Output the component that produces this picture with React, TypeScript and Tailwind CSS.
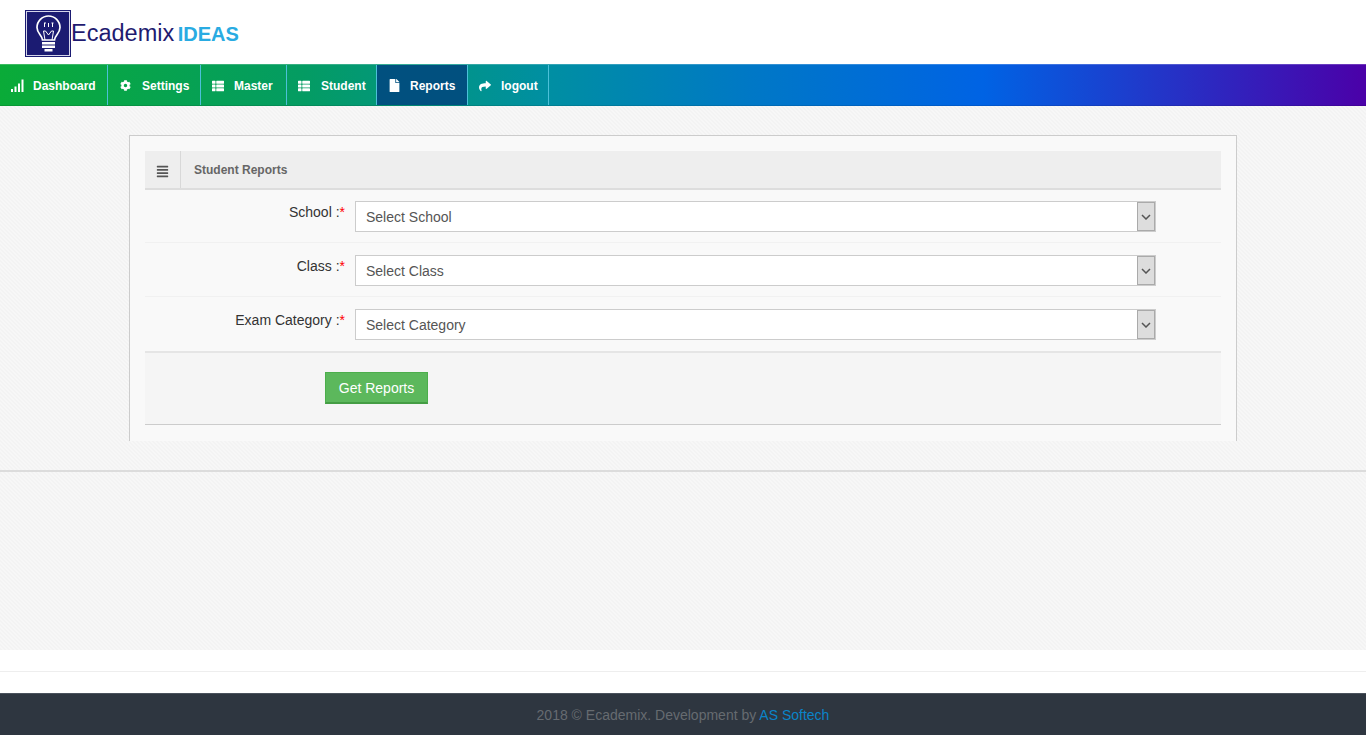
import React from "react";
import { FaCog, FaThList, FaFile, FaShare, FaAlignJustify } from "react-icons/fa";

function SignalIcon() {
  return (
    <svg width="13" height="13" viewBox="0 0 13 13">
      <rect x="0" y="10" width="2" height="3" fill="#fff" />
      <rect x="3.500" y="7.500" width="2" height="5.500" fill="#fff" />
      <rect x="7" y="4.500" width="2" height="8.500" fill="#fff" />
      <rect x="10.500" y="0.500" width="2" height="12.500" fill="#fff" />
    </svg>
  );
}

const navItems = [
  { label: "Dashboard", icon: <SignalIcon />, w: "w-[108px]", gap: "w-[33px] pl-[11px]", active: false },
  { label: "Settings", icon: <FaCog size={11} color="#fff" />, w: "w-[93px]", gap: "w-[34px] pl-[12px]", active: false },
  { label: "Master", icon: <FaThList size={12} color="#fff" />, w: "w-[86px]", gap: "w-[33px] pl-[11px]", active: false },
  { label: "Student", icon: <FaThList size={12} color="#fff" />, w: "w-[90px]", gap: "w-[34px] pl-[11px]", active: false },
  { label: "Reports", icon: <FaFile size={13} color="#fff" />, w: "w-[91px]", gap: "w-[33px] pl-[11px]", active: true },
  { label: "logout", icon: <FaShare size={12} color="#fff" />, w: "w-[81px]", gap: "w-[33px] pl-[11px]", active: false },
];

const rows = [
  { label: "School", value: "Select School", h: "h-[53px] pt-[11px] border-b border-[#f1f1f1]" },
  { label: "Class", value: "Select Class", h: "h-[54px] pt-[12px] border-b border-[#f1f1f1]" },
  { label: "Exam Category", value: "Select Category", h: "h-[54px] pt-[12px]" },
];

function Logo() {
  return (
    <svg width="46" height="47" viewBox="0 0 46 47" className="shrink-0">
      <rect x="0" y="0" width="46" height="47" fill="#1b1b72" />
      <rect x="1.500" y="1.500" width="43" height="44" fill="none" stroke="#d5d5ea" strokeWidth="1" />
      <path d="M17.500 30c0-4.500-5.500-6.500-5.500-12.500a11.500 11.500 0 0 1 23 0c0 6-5.500 8-5.500 12.500z" fill="none" stroke="#fff" strokeWidth="1.700" />
      <path d="M20 30l-1.500-9h2l3 4 3-4h2L27 30" fill="none" stroke="#fff" strokeWidth="1" />
      <path d="M19.500 13v4M23.500 13v4M27.500 13v4M19 13h2M26.500 13h2" stroke="#fff" strokeWidth="1" />
      <rect x="17" y="32" width="13" height="2.500" fill="#fff" />
      <rect x="17" y="35.500" width="13" height="2.500" fill="#fff" />
      <rect x="19.500" y="39" width="8" height="2.500" fill="#fff" />
    </svg>
  );
}

export default function App() {
  return (
    <div className="min-h-[735px] bg-white font-['Liberation_Sans',Arial,sans-serif]">
      <header className="h-[64px] bg-white pl-[25px] pt-[10px] flex items-start">
        <Logo />
        <div className="flex items-baseline h-[47px] pt-[7px]">
          <span className="text-[23.500px] leading-[32px] text-[#1f1b70]">Ecademix</span>
          <span className="text-[20px] leading-[32px] font-bold text-[#29abe2] ml-[3.500px]">IDEAS</span>
        </div>
      </header>

      <nav className="h-[42px] flex bg-[linear-gradient(to_right,#0aab38_0%,#049c62_22%,#008fa2_40%,#0078c6_55%,#0063e4_72%,#4b00a8_100%)] border-t border-t-white/20 border-b border-b-black/10">
        {navItems.map(({ label, icon, w, gap, active }) => (
          <a
            key={label}
            className={`${w} flex items-center pt-[1px] border-r border-[#4cc0d8] text-white text-[12px] font-bold ${active ? "bg-[#01507f]" : ""}`}
          >
            <span className={`${gap} flex items-center shrink-0`}>{icon}</span>
            <span>{label}</span>
          </a>
        ))}
      </nav>

      <main className="h-[544px] pt-[29px] bg-[linear-gradient(45deg,#f3f3f3_25%,#f7f7f7_25%,#f7f7f7_50%,#f3f3f3_50%,#f3f3f3_75%,#f7f7f7_75%)] bg-[length:4px_4px]">
        <section className="mx-[129px] w-[1108px] h-[306px] border border-b-0 border-[#cccccc] bg-[#f9f9f9] px-[15px] pt-[15px]">
          <div className="h-[39px] flex bg-[#eeeeee] border-b-2 border-[#dddddd]">
            <div className="w-[36px] flex items-center justify-center border-r border-[#d8d8d8] text-[#555]">
              <FaAlignJustify size={13} className="mt-[3px]" />
            </div>
            <div className="pl-[13px] flex items-center text-[12px] font-bold text-[#666666]">Student Reports</div>
          </div>

          {rows.map((r) => (
            <div key={r.label} className={`${r.h} flex`}>
              <div className="w-[200px] text-right text-[14px] leading-[22px] text-[#333333]">
                {r.label} :<span className="text-[#ff0000]">*</span>
              </div>
              <div className="ml-[10px] w-[801px] h-[31px] flex bg-white border border-[#cccccc]">
                <span className="flex-1 pl-[10px] text-[14px] leading-[30px] text-[#555555]">{r.value}</span>
                <span className="w-[18px] flex items-center justify-center bg-[#dddddd] border border-[#aaaaaa]">
                  <svg width="10" height="6" viewBox="0 0 10 6">
                    <path d="M1 1l4 4 4-4" fill="none" stroke="#555" strokeWidth="1.500" />
                  </svg>
                </span>
              </div>
            </div>
          ))}

          <div className="h-[74px] bg-[#f5f5f5] border-t-2 border-[#e5e5e5] border-b border-b-[#cccccc] pt-[19px] pl-[180px]">
            <button className="w-[103px] h-[32px] bg-[#5cb85c] border border-[#4cae4c] border-b-2 border-b-[#449d44] text-white text-[14px] leading-[20px]">
              Get Reports
            </button>
          </div>
        </section>

        <div className="mt-[29px] border-t-2 border-[#dcdcdc]" />
      </main>

      <div className="h-[43px] bg-white pt-[21px]">
        <div className="border-t border-[#eeeeee]" />
      </div>

      <footer className="h-[42px] pt-[1px] bg-[#2e3640] border-t border-[#4a525c] flex items-center justify-center text-[14px] text-[#666b70]">
        <span>
          2018 © Ecademix. Development by <a className="text-[#0a84c8]">AS Softech</a>
        </span>
      </footer>
    </div>
  );
}
